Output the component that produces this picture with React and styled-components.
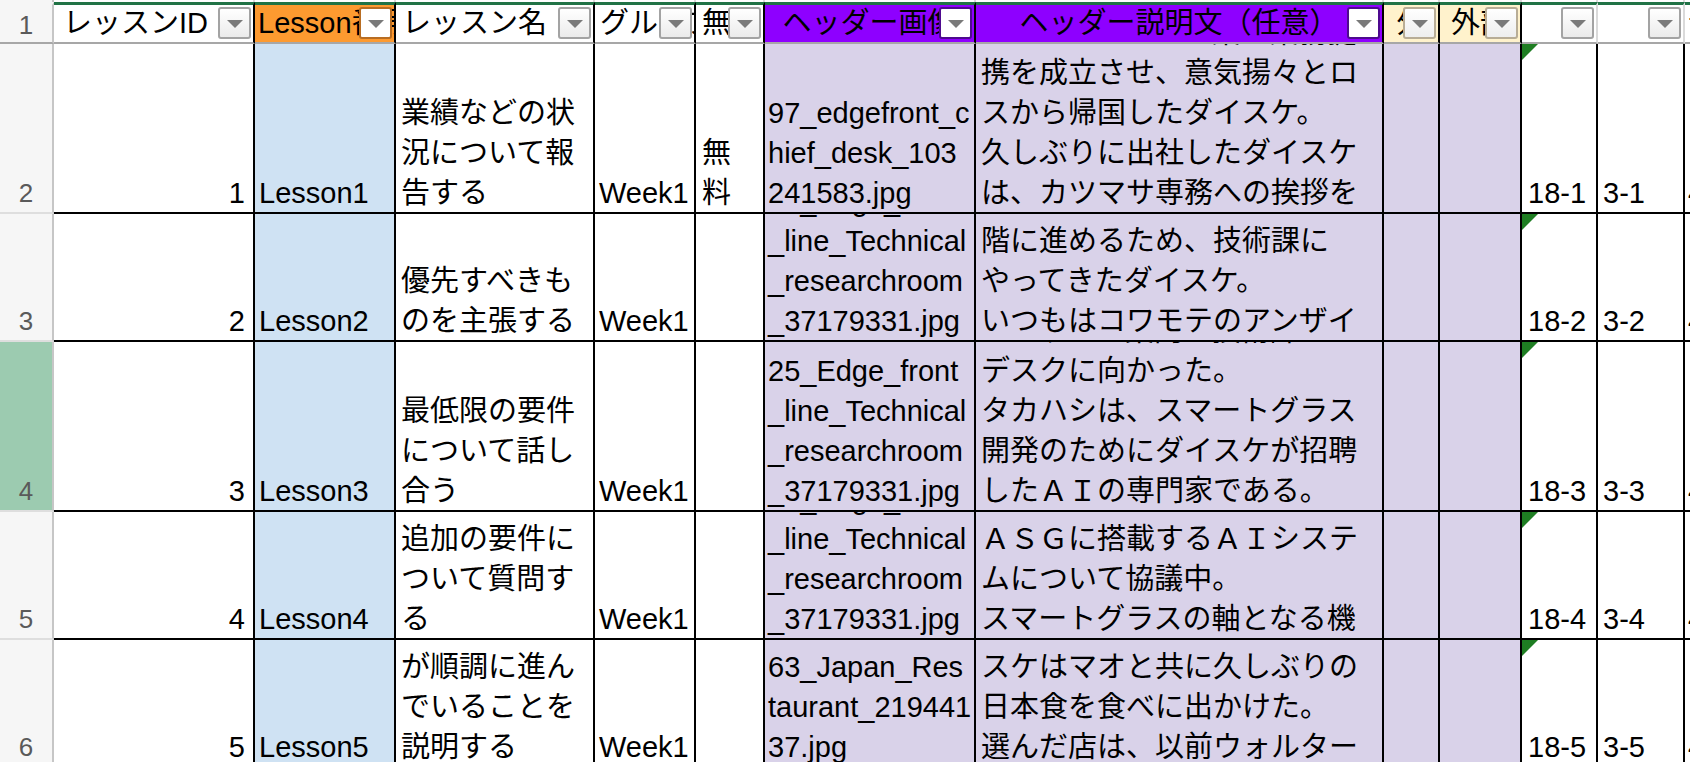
import styled, { createGlobalStyle } from 'styled-components';

const GlobalStyle = createGlobalStyle`
  * {
    box-sizing: border-box;
  }
  html,
  body {
    margin: 0;
    overflow: hidden;
    background: #fff;
    font-family: 'Liberation Sans', 'Noto Sans CJK JP', sans-serif;
    color: #000;
  }
`;

const LAVENDER = '#d9d2e9';
const PURPLE = '#8e00ff';
const YELLOW = '#fff2cc';

const columns = [
  { key: 'a', w: 201, head: 'レッスンID', hpad: 9, pad: 8, align: 'flex-end' },
  { key: 'b', w: 141, head: 'Lesson番号', hpad: 3, pad: 4, hbg: '#fd9a30', tone: 'orange', bg: '#cfe2f3' },
  { key: 'c', w: 199, head: 'レッスン名', hpad: 6, pad: 5 },
  { key: 'd', w: 101, head: 'グループ', hpad: 5, pad: 4 },
  { key: 'e', w: 69, head: '無料', hpad: 6, pad: 6 },
  { key: 'f', w: 211, head: 'ヘッダー画像', center: true, pad: 3, hbg: PURPLE, tone: 'purple', bg: LAVENDER },
  { key: 'g', w: 408, head: 'ヘッダー説明文（任意）', center: true, pad: 5, hbg: PURPLE, tone: 'purple', bg: LAVENDER },
  { key: 'h', w: 56, head: '外', center: true, pad: 4, hbg: YELLOW, tone: 'tan', bg: LAVENDER },
  { key: 'i', w: 82, head: '外部', center: true, pad: 4, hbg: YELLOW, tone: 'tan', bg: LAVENDER },
  { key: 'j', w: 76, head: '', pad: 6, flag: true, light: true },
  { key: 'k', w: 87, head: '', pad: 5, light: true },
  { key: 'l', w: 120, head: '音声', hpad: 3, pad: 3, light: true, noFilter: true },
];

const fileName = ['25_Edge_front', '_line_Technical', '_researchroom', '_37179331.jpg'];

const rows = [
  {
    n: 2,
    h: 170,
    cells: {
      a: ['1'],
      b: ['Lesson1'],
      c: ['業績などの状', '況について報', '告する'],
      d: ['Week1'],
      e: ['無', '料'],
      f: ['97_edgefront_c', 'hief_desk_103', '241583.jpg'],
      g: ['アメリカのＩＴ企業と業務提', '携を成立させ、意気揚々とロ', 'スから帰国したダイスケ。', '久しぶりに出社したダイスケ', 'は、カツマサ専務への挨拶を'],
      j: ['18-1'],
      k: ['3-1'],
      l: ['4-1'],
    },
  },
  {
    n: 3,
    h: 128,
    cells: {
      a: ['2'],
      b: ['Lesson2'],
      c: ['優先すべきも', 'のを主張する'],
      d: ['Week1'],
      f: fileName,
      g: ['スマートグラス開発を次の段', '階に進めるため、技術課に', 'やってきたダイスケ。', 'いつもはコワモテのアンザイ'],
      j: ['18-2'],
      k: ['3-2'],
      l: ['4-2'],
    },
  },
  {
    n: 4,
    h: 170,
    active: true,
    cells: {
      a: ['3'],
      b: ['Lesson3'],
      c: ['最低限の要件', 'について話し', '合う'],
      d: ['Week1'],
      f: fileName,
      g: ['アンザイの案内で技術課の', 'デスクに向かった。', 'タカハシは、スマートグラス', '開発のためにダイスケが招聘', 'したＡＩの専門家である。'],
      j: ['18-3'],
      k: ['3-3'],
      l: ['4-3'],
    },
  },
  {
    n: 5,
    h: 128,
    cells: {
      a: ['4'],
      b: ['Lesson4'],
      c: ['追加の要件に', 'ついて質問す', 'る'],
      d: ['Week1'],
      f: fileName,
      g: ['タカハシとダイスケは、新型', 'ＡＳＧに搭載するＡＩシステ', 'ムについて協議中。', 'スマートグラスの軸となる機'],
      j: ['18-4'],
      k: ['3-4'],
      l: ['4-4'],
    },
  },
  {
    n: 6,
    h: 128,
    cells: {
      a: ['5'],
      b: ['Lesson5'],
      c: ['プロジェクト', 'が順調に進ん', 'でいることを', '説明する'],
      d: ['Week1'],
      f: ['63_Japan_Res', 'taurant_219441', '37.jpg'],
      g: ['仕事がひと段落したダイ', 'スケはマオと共に久しぶりの', '日本食を食べに出かけた。', '選んだ店は、以前ウォルター'],
      j: ['18-5'],
      k: ['3-5'],
      l: ['4-5'],
    },
  },
];

const tones = {
  gray: { border: '#a3a3a3', bg: 'linear-gradient(#ffffff, #ebebeb)' },
  orange: { border: '#b86d22', bg: '#ffffff' },
  purple: { border: '#4e0a8f', bg: '#ffffff' },
  tan: { border: '#b8ad96', bg: 'linear-gradient(#ffffff, #eeeeee)' },
};

const Viewport = styled.div`
  width: 100vw;
  height: 100vh;
  overflow: hidden;
`;

const Sheet = styled.div`
  display: grid;
  grid-template-columns: 54px ${columns.map((c) => `${c.w}px`).join(' ')};
  grid-template-rows: 2px 42px ${rows.map((r) => `${r.h}px`).join(' ')};
  width: max-content;
  font-size: 29px;
`;

const Strip = styled.div`
  background: ${(p) => (p.$corner ? '#f6f6f6' : '#fff')};
  border-right: 2px solid ${(p) => (p.$corner ? '#c6c6c6' : '#dadada')};
`;

const RowHead = styled.div`
  display: flex;
  flex-direction: column;
  justify-content: ${(p) => (p.$header ? 'center' : 'flex-end')};
  overflow: hidden;
  background: ${(p) => (p.$active ? '#9ccbb0' : '#f6f6f6')};
  border-top: ${(p) => (p.$header ? '3px solid transparent' : 'none')};
  border-right: 2px solid #c6c6c6;
  border-bottom: 2px solid ${(p) => (p.$header ? '#a7a7a7' : '#dedede')};
  color: #5a5a5a;
  font-size: 26px;
`;

const HeadCell = styled.div`
  position: relative;
  display: flex;
  align-items: center;
  justify-content: ${(p) => (p.$center ? 'center' : 'flex-start')};
  padding-left: ${(p) => (p.$center ? 0 : p.$pad)}px;
  overflow: hidden;
  white-space: nowrap;
  line-height: 29px;
  background: ${(p) => p.$bg || '#fff'};
  border-top: 3px solid #217346;
  border-right: 2px solid ${(p) => (p.$light ? '#dadada' : '#000')};
  border-bottom: 2px solid #a7a7a7;
`;

const FilterButton = styled.span`
  position: absolute;
  top: 2px;
  right: 2px;
  width: 33px;
  height: 32px;
  display: flex;
  align-items: center;
  justify-content: center;
  border: 2px solid ${(p) => tones[p.$tone].border};
  border-radius: 3px;
  background: ${(p) => tones[p.$tone].bg};

  &::after {
    content: '';
    border-left: 8px solid transparent;
    border-right: 8px solid transparent;
    border-top: 8px solid #7a7a7a;
    margin-top: 1px;
  }
`;

const Cell = styled.div`
  position: relative;
  display: flex;
  flex-direction: column;
  justify-content: flex-end;
  overflow: hidden;
  padding: 0 ${(p) => p.$pad}px;
  background: ${(p) => p.$bg || '#fff'};
  border-right: 2px solid #000;
  border-bottom: 2px solid #000;

  ${(p) =>
    p.$flag &&
    `
    &::before {
      content: '';
      position: absolute;
      top: 0;
      left: 0;
      z-index: 1;
      border-top: 16px solid #1e7d22;
      border-right: 16px solid transparent;
    }
  `}
`;

const Line = styled.div`
  flex-shrink: 0;
  height: 40px;
  display: flex;
  align-items: flex-end;
  justify-content: ${(p) => p.$align || 'flex-start'};
  padding-bottom: 4px;
  line-height: 29px;
  white-space: nowrap;
`;

const App = () => {
  return (
    <Viewport>
      <GlobalStyle />
      <Sheet>
        <Strip $corner />
        {columns.map((c) => (
          <Strip key={c.key} />
        ))}

        <RowHead $header>
          <Line $align="center">1</Line>
        </RowHead>
        {columns.map((c) => (
          <HeadCell key={c.key} $bg={c.hbg} $center={c.center} $pad={c.hpad} $light={c.light}>
            {c.head}
            {!c.noFilter && <FilterButton $tone={c.tone || 'gray'} />}
          </HeadCell>
        ))}

        {rows.map((r) => [
          <RowHead key={`h${r.n}`} $active={r.active}>
            <Line $align="center">{r.n}</Line>
          </RowHead>,
          ...columns.map((c) => (
            <Cell key={`${r.n}${c.key}`} $bg={c.bg} $pad={c.pad} $flag={c.flag}>
              {(r.cells[c.key] || []).map((text, i) => (
                <Line key={i} $align={c.align}>
                  {text}
                </Line>
              ))}
            </Cell>
          )),
        ])}
      </Sheet>
    </Viewport>
  );
};

export default App;
